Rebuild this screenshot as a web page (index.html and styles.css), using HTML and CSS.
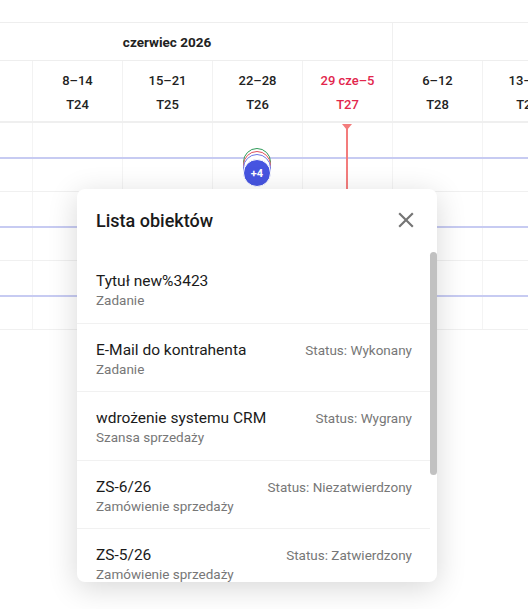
FILE: index.html
```html
<!DOCTYPE html>
<html lang="pl">
<head>
<meta charset="utf-8">
<title>Harmonogram</title>
<link rel="stylesheet" href="styles.css">
</head>
<body>
<div class="timeline">
  <div class="top-bar"></div>
  <div class="months">
    <div class="month month-june">czerwiec 2026</div>
    <div class="month month-july"></div>
  </div>
  <div class="weeks">
    <div class="week"></div>
    <div class="week"><span class="wk-range">8–14</span><span class="wk-num">T24</span></div>
    <div class="week"><span class="wk-range">15–21</span><span class="wk-num">T25</span></div>
    <div class="week"><span class="wk-range">22–28</span><span class="wk-num">T26</span></div>
    <div class="week today"><span class="wk-range">29 cze–5</span><span class="wk-num">T27</span></div>
    <div class="week"><span class="wk-range">6–12</span><span class="wk-num">T28</span></div>
    <div class="week"><span class="wk-range">13–19</span><span class="wk-num">T29</span></div>
  </div>
  <div class="rows">
    <div class="row"><div class="bar"></div></div>
    <div class="row"><div class="bar"></div></div>
    <div class="row"><div class="bar"></div></div>
  </div>

  <div class="today-line"></div>

  <div class="cluster">
    <span class="dot dot-green"></span>
    <span class="dot dot-red"></span>
    <span class="dot dot-blue"></span>
    <span class="dot dot-main">+4</span>
  </div>

  <div class="popup">
    <div class="popup-head">
      <h2 class="popup-title">Lista obiektów</h2>
      <button class="close" aria-label="Zamknij">
        <svg viewBox="0 0 24 24" width="26" height="26"><path d="M19 6.41L17.59 5 12 10.59 6.41 5 5 6.41 10.59 12 5 17.59 6.41 19 12 13.41 17.59 19 19 17.59 13.41 12z" fill="#757575"/></svg>
      </button>
    </div>
    <div class="list-wrap">
      <div class="list">
        <div class="item">
          <div class="item-main"><div class="item-title">Tytuł new%3423</div><div class="item-sub">Zadanie</div></div>
        </div>
        <div class="item">
          <div class="item-main"><div class="item-title">E-Mail do kontrahenta</div><div class="item-sub">Zadanie</div></div>
          <div class="item-status">Status: Wykonany</div>
        </div>
        <div class="item">
          <div class="item-main"><div class="item-title">wdrożenie systemu CRM</div><div class="item-sub">Szansa sprzedaży</div></div>
          <div class="item-status">Status: Wygrany</div>
        </div>
        <div class="item">
          <div class="item-main"><div class="item-title">ZS-6/26</div><div class="item-sub">Zamówienie sprzedaży</div></div>
          <div class="item-status">Status: Niezatwierdzony</div>
        </div>
        <div class="item">
          <div class="item-main"><div class="item-title">ZS-5/26</div><div class="item-sub">Zamówienie sprzedaży</div></div>
          <div class="item-status">Status: Zatwierdzony</div>
        </div>
      </div>
      <div class="scrollbar"><div class="thumb"></div></div>
    </div>
  </div>
</div>
</body>
</html>
```

FILE: styles.css
```css
* { box-sizing: border-box; }
html, body { margin: 0; padding: 0; background: #fff; }
body {
  font-family: Roboto, "Noto Sans", "Liberation Sans", sans-serif;
  color: #212121;
  width: 528px;
  height: 609px;
  overflow: hidden;
}
.timeline {
  position: relative;
  width: 528px;
  height: 609px;
  overflow: hidden;
}
.top-bar {
  height: 23px;
  border-bottom: 1px solid #eeeeee;
}
.months {
  display: flex;
  height: 38px;
  margin-left: -58px;
  border-bottom: 1px solid #eeeeee;
}
.month {
  flex: none;
  display: flex;
  align-items: center;
  justify-content: center;
  font-size: 13.5px;
  font-weight: 700;
  color: #222;
  border-right: 1px solid #f0f0f0;
}
.month-june { width: 451px; }
.month-july { width: 300px; }
.weeks {
  display: flex;
  height: 62px;
  margin-left: -58px;
  border-bottom: 2px solid #efefef;
}
.week {
  flex: none;
  width: 90px;
  display: flex;
  flex-direction: column;
  align-items: center;
  justify-content: center;
  border-right: 1px solid #f2f2f2;
  font-size: 13px;
  font-weight: 500;
  color: #222;
  line-height: 24px;
  padding-top: 3px;
}
.week:first-child { width: 91px; }
.week.today { color: #e2264d; }
.rows {
  display: flex;
  flex-direction: column;
}
.row {
  height: 69px;
  border-bottom: 1px solid #f0f0f0;
  display: flex;
  align-items: center;
  background-image: repeating-linear-gradient(to right, transparent 0 32px, #f4f4f4 32px 33px, transparent 33px 90px);
  background-position: 0 0;
  background-size: 90px 100%;
}
.row .bar {
  width: 100%;
  height: 2px;
  background: #c7cbf2;
  margin-top: 1px;
}
.today-line {
  position: absolute;
  left: 346px;
  top: 124px;
  width: 2px;
  height: 100px;
  background: #f37c7c;
}
.today-line::before {
  content: "";
  position: absolute;
  left: -4px;
  top: 0;
  border-left: 5px solid transparent;
  border-right: 5px solid transparent;
  border-top: 6px solid #f37c7c;
}
.cluster {
  position: absolute;
  left: 243px;
  top: 148px;
  width: 28px;
  height: 42px;
}
.dot {
  position: absolute;
  left: 0;
  width: 28px;
  height: 28px;
  border-radius: 50%;
  background: #fff;
}
.dot-green { top: 0; border: 1.5px solid #2e9a58; }
.dot-red { top: 3px; border: 1.5px solid #e0505c; }
.dot-blue { top: 6px; border: 1.5px solid #6b78e6; }
.dot-main {
  top: 11px;
  background: #4654e0;
  border: 1.5px solid #fff;
  color: #fff;
  font-size: 11px;
  font-weight: 700;
  display: flex;
  align-items: center;
  justify-content: center;
}
.popup {
  position: absolute;
  left: 77px;
  top: 189px;
  width: 360px;
  height: 393px;
  background: #fff;
  border-radius: 8px;
  box-shadow: 0 6px 30px rgba(0, 0, 0, 0.16);
  display: flex;
  flex-direction: column;
  overflow: hidden;
}
.popup-head {
  flex: none;
  height: 62px;
  display: flex;
  align-items: center;
  justify-content: space-between;
  padding: 0 18px 0 19px;
}
.popup-title {
  margin: 0;
  font-size: 18px;
  font-weight: 500;
  color: #1a1a1a;
}
.close {
  border: 0;
  background: none;
  padding: 0;
  width: 26px;
  height: 26px;
  display: flex;
}
.list-wrap {
  flex: 1;
  min-height: 0;
  display: flex;
}
.list {
  flex: 1;
  min-width: 0;
  overflow: hidden;
  padding-top: 4px;
}
.scrollbar {
  flex: none;
  width: 7px;
  padding-top: 1px;
}
.thumb {
  height: 223px;
  background: #c1c1c1;
  border-radius: 4px;
}
.item {
  display: flex;
  justify-content: space-between;
  align-items: flex-start;
  padding: 16px 18px 13.5px 19px;
  border-bottom: 1px solid #f1f1f1;
}
.item-title {
  font-size: 15.5px;
  line-height: 20px;
  color: #1a1a1a;
}
.item-sub {
  font-size: 13.5px;
  line-height: 18px;
  color: #777;
}
.item-status {
  font-size: 13.5px;
  line-height: 20px;
  color: #777;
  white-space: nowrap;
}
```
